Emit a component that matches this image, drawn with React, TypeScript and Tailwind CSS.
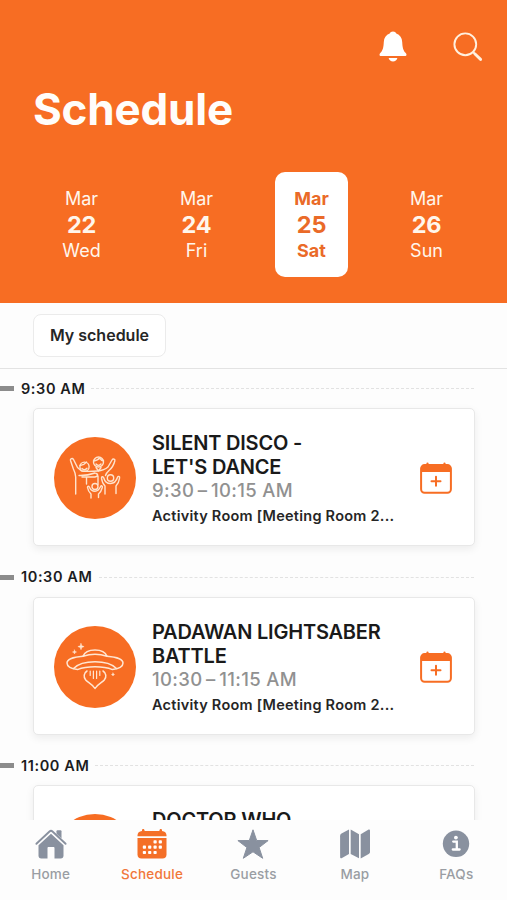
import React, { useState } from 'react';

interface Day {
  month: string;
  date: string;
  weekday: string;
}

interface Session {
  slot: string;
  title: string[];
  time: string;
  room: string;
  art: 'disco' | 'ufo' | 'none';
}

const days: Day[] = [
  { month: 'Mar', date: '22', weekday: 'Wed' },
  { month: 'Mar', date: '24', weekday: 'Fri' },
  { month: 'Mar', date: '25', weekday: 'Sat' },
  { month: 'Mar', date: '26', weekday: 'Sun' },
];

// Times use thin spaces around the dash
const sessions: Session[] = [
  {
    slot: '9:30 AM',
    title: ['SILENT DISCO -', "LET'S DANCE"],
    time: '9:30\u2009–\u200910:15 AM',
    room: 'Activity Room [Meeting Room 2...',
    art: 'disco',
  },
  {
    slot: '10:30 AM',
    title: ['PADAWAN LIGHTSABER', 'BATTLE'],
    time: '10:30\u2009–\u200911:15 AM',
    room: 'Activity Room [Meeting Room 2...',
    art: 'ufo',
  },
  {
    slot: '11:00 AM',
    title: ['DOCTOR WHO'],
    time: '',
    room: '',
    art: 'none',
  },
];

// Icons
const BellIcon = () => (
  <svg width="28" height="32" viewBox="0 0 28 32" fill="#fff">
    <path d="M14 .5c1.600 0 2.800.9 3.300 2.100 3.700 1.400 5.700 4.400 5.900 8.400.3 5.500 1 8.600 3.300 10.800.7.700 1 1.300 1 1.900 0 .8-.6 1.300-1.600 1.300H2.100C1.100 25 .5 24.500.5 23.700c0-.6.3-1.200 1-1.900 2.300-2.200 3-5.300 3.300-10.800.2-4 2.200-7 5.900-8.400C11.200 1.400 12.400.5 14 .5z" />
    <path d="M9.600 27h8.800c-.6 2.200-2.200 3.500-4.400 3.500S10.200 29.200 9.600 27z" />
  </svg>
);

const SearchIcon = () => (
  <svg width="30" height="30" viewBox="0 0 30 30" fill="none" stroke="#fff0df" strokeLinecap="round">
    <circle cx="12.300" cy="12.300" r="10.900" strokeWidth="1.900" />
    <path d="M20.300 20.300l1.500 1.500" strokeWidth="2" />
    <path d="M22 22l5.600 5.400" strokeWidth="2.900" />
  </svg>
);

const AddCalendarIcon = () => (
  <svg width="32" height="32" viewBox="0 0 32 32" fill="none" stroke="#f76d23">
    <rect x="1.100" y="3.100" width="29.800" height="27.700" rx="3.500" strokeWidth="2" />
    <path d="M1.500 10V6.500a3.500 3.500 0 013.500-3.400h22a3.500 3.500 0 013.500 3.400V10z" fill="#f76d23" stroke="none" />
    <path d="M7.500 3.500V1.600M24.500 3.500V1.600" strokeWidth="2.200" strokeLinecap="round" />
    <path d="M16 14.800v9M11.500 19.300h9" strokeWidth="2" strokeLinecap="round" />
  </svg>
);

const DiscoArt = () => (
  <svg width="82" height="82" viewBox="0 0 82 82" fill="none" stroke="#ffe3cc" strokeWidth="1.400" strokeLinecap="round" strokeLinejoin="round">
    <path d="M21.700 57V40c0-3-.8-5-2.300-8L16.500 23.500c-.6-2 2-2.800 3-1l4 8 4 3.500c5 .6 11 .4 16 0 5-.4 8-1.600 10.500-4L58 23c1.200-2 3.500-.8 2.800 1-1 4-2.800 7-5.800 9.500-2 1.800-3 3-3.500 5" />
    <circle cx="30.500" cy="29.700" r="4.600" />
    <path d="M26 28.500c3-.4 5-1.400 6.500-3.400M28 31.500c1.500 1.500 3.500 1.500 5-.3" />
    <circle cx="44.500" cy="25" r="5" />
    <path d="M39.500 24c3-.5 5-1.500 6-3 1 1.500 2.500 2.500 4 2.800M42 27c1.500 1.800 3.500 1.800 5 0M42 30.500l2.500 3.500 2.500-3.500M25 38.500c5 .2 9 0 16-2.500M28 40h13c3-.4 3.500-3 1-3.500M32.500 41v6M44 39v8.500" />
    <circle cx="41" cy="49.500" r="3" />
    <path d="M37 61v-4c-2-1.800-3-3.500-3.500-6.500-.2-1.600 1.500-1.800 2-.3.800 2.200 2.500 4 5.500 4s4.200-1.800 5.500-4.500c.7-1.500 2.300-.8 1.800.8-.8 3-1.800 5-3.800 6.500v3.500" />
    <circle cx="56.500" cy="41" r="3.200" />
    <path d="M51 57v-8c-2-2-3.200-4.500-3.500-8-.1-1.600 1.700-1.800 2.200-.3.900 3.400 2.800 5.800 6.800 5.800s5.800-2.300 7-6.200c.6-1.600 2.400-1 2.100.7-.6 4-1.600 6-3.600 8v7.500" />
  </svg>
);

const UfoArt = () => (
  <svg width="82" height="82" viewBox="0 0 82 82" fill="none" stroke="#ffe6d2" strokeWidth="1.500" strokeLinecap="round" strokeLinejoin="round">
    <path d="M29 30.300c1.500-4 6-6.300 12-6.300s10.500 2.300 12 6.300c-7-2.300-17-2.300-24 0z" />
    <path d="M29 30.300C19.500 31 13 33.600 13 37c0 3.500 4.500 5.700 10.500 6.600C28 41.800 34 40.800 41 40.800s13 1 17.500 2.800C64.500 42.700 69 40.500 69 37c0-3.400-6.500-6-16-6.700" />
    <path d="M19.500 42.500C24 38 32 35.800 41 35.800s17 2.200 21.500 6.700" />
    <path d="M33 45c-3.200 2-3.800 6.200-1.300 9C34 56.500 38.500 58 41 62.500c2.500-4.500 7-6 9.300-8.500 2.500-2.800 1.900-7-1.300-9" />
    <path d="M36.200 45v4.500M39.400 45v7.500M42.600 45v7.500M45.800 45v4.500" strokeWidth="1.200" />
    <path d="M27 17.500l.8 2.300 2.300.8-2.300.8-.8 2.300-.8-2.300-2.300-.8 2.300-.8zM20.500 24l.5 1.500 1.500.5-1.500.5-.5 1.500-.5-1.500-1.500-.5 1.500-.5zM59 47l.4 1.100 1.100.4-1.100.4-.4 1.100-.4-1.100-1.100-.4 1.100-.4z" fill="#ffe6d2" strokeWidth=".5" />
  </svg>
);

const HomeIcon = () => (
  <svg width="32" height="32" viewBox="0 0 32 32" fill="#89919f">
    <path d="M1.400 15.800L14.500 3.500a2.200 2.200 0 013 0l13.100 12.300" fill="none" stroke="#89919f" strokeWidth="1.900" strokeLinecap="round" />
    <path d="M21.500 3.200c0-.5.400-.9.900-.9h3.200c.5 0 .9.400.9.900v7.300l-5-4.700z" />
    <path d="M3.500 17.300L16 5.800l12.500 11.500v10.500c0 1.600-1 2.700-2.700 2.700h-6.300V20c0-.7-.4-1.100-1-1.100h-5c-.6 0-1 .4-1 1.100v10.500H6.200c-1.700 0-2.700-1.100-2.700-2.700z" />
  </svg>
);

const CalendarIcon = () => (
  <svg width="30" height="32" viewBox="0 0 30 32" fill="#f46f27">
    <path d="M5 3V2c0-1.500 2.400-1.500 2.400 0 0 .7.300 1 1 1h13.200c.7 0 1-.3 1-1 0-1.500 2.400-1.500 2.400 0v1c2.800.2 4.500 2 4.500 4.200v1.100H.5V7.200C.5 5 2.200 3.200 5 3z" />
    <path d="M.5 10h29v16.500c0 2.500-1.500 4-4 4h-21c-2.500 0-4-1.500-4-4z" />
    <g fill="#fff">
      <rect x="16.500" y="12.300" width="3.200" height="3.200" rx=".8" />
      <rect x="21.700" y="12.300" width="3.200" height="3.200" rx=".8" />
      <rect x="5.800" y="17.600" width="3.200" height="3.200" rx=".8" />
      <rect x="11.100" y="17.600" width="3.200" height="3.200" rx=".8" />
      <rect x="16.500" y="17.600" width="3.200" height="3.200" rx=".8" />
      <rect x="21.700" y="17.600" width="3.200" height="3.200" rx=".8" />
      <rect x="5.800" y="22.900" width="3.200" height="3.200" rx=".8" />
      <rect x="11.100" y="22.900" width="3.200" height="3.200" rx=".8" />
      <rect x="16.500" y="22.900" width="3.200" height="3.200" rx=".8" />
    </g>
  </svg>
);

const StarIcon = () => (
  <svg width="32" height="32" viewBox="0 0 32 32" fill="#89919f" stroke="#89919f" strokeWidth="1" strokeLinejoin="round">
    <path d="M16 1.800l3.700 10.700 11.400.1-9 6.900L25.700 30.300 16 23.800l-9.700 6.500 3.600-10.800-9-6.900 11.400-.1z" />
  </svg>
);

const MapIcon = () => (
  <svg width="32" height="32" viewBox="0 0 32 32" fill="#89919f">
    <path d="M10 1.500v24.500l-7 4.100c-1 .5-1.900.1-1.900-1.100V8.200c0-1.200.4-2 1.400-2.600z" />
    <path d="M11.700 1.500l8.300 4.700v24.100L11.700 26z" />
    <path d="M21.700 6.200l7.500-4.500c1-.5 1.800-.1 1.800 1.100v21c0 1-.4 1.700-1.300 2.300l-8 4.400z" />
  </svg>
);

const InfoIcon = () => (
  <svg width="28" height="32" viewBox="0 0 28 32">
    <circle cx="14" cy="15.800" r="13.200" fill="#89919f" />
    <circle cx="13.900" cy="9.600" r="1.900" fill="#fff" />
    <path d="M11.200 13.600h3.600v7.800M10.800 21.500h6.800" fill="none" stroke="#fff" strokeWidth="2.300" strokeLinecap="round" />
  </svg>
);

const tabs = [
  { label: 'Home', Icon: HomeIcon },
  { label: 'Schedule', Icon: CalendarIcon },
  { label: 'Guests', Icon: StarIcon },
  { label: 'Map', Icon: MapIcon },
  { label: 'FAQs', Icon: InfoIcon },
];

const SessionCard: React.FC<{ session: Session }> = ({ session }) => (
  <section className="h-[188.500px] shrink-0">
    <div className="flex h-[39px] items-center">
      <div className="h-[5px] w-[14px] bg-[#8c8c8c]" />
      <h2 className="ml-[7px] text-[14.500px] leading-5 font-semibold tracking-[0.600px] text-[#1c1c1e]">{session.slot}</h2>
      <div className="mr-[33px] ml-[6px] flex-1 border-t border-dashed border-[#e2e2e2]" />
    </div>
    <article className="mr-8 ml-[33px] flex h-[138px] rounded-[5px] border border-[#e8e8e8] bg-white shadow-[0_3px_8px_rgba(0,0,0,0.07)]">
      <div className="mt-[28px] ml-[20px] h-[82px] w-[82px] shrink-0 rounded-full bg-[#f76d23]">
        {session.art === 'disco' && <DiscoArt />}
        {session.art === 'ufo' && <UfoArt />}
      </div>
      <div className="mt-[22px] ml-4 flex-1 whitespace-nowrap">
        <h3 className="text-[20px] leading-6 font-semibold tracking-[-0.200px] text-[#1a1a1a]">
          {session.title.map((line) => (
            <span key={line} className="block">{line}</span>
          ))}
        </h3>
        <p className="text-[18.500px] leading-[23px] font-medium tracking-[0.350px] text-[#919191]">{session.time}</p>
        <p className="mt-px text-[14.500px] leading-[26px] font-semibold tracking-[0.250px] text-[#262626]">{session.room}</p>
      </div>
      <button className="mt-[53px] mr-[22px] h-8 w-8 shrink-0" aria-label="Add to my schedule">
        <AddCalendarIcon />
      </button>
    </article>
  </section>
);

const App: React.FC = () => {
  const [selectedDay, setSelectedDay] = useState('25');
  const [activeTab, setActiveTab] = useState('Schedule');

  return (
    <div className="flex h-[900px] w-[507px] flex-col overflow-hidden bg-[#fdfdfd] font-[Inter,sans-serif]">
      <header className="h-[303px] shrink-0 bg-[#f76d23] text-[#fff6ec]">
        <div className="flex h-[82px] items-start justify-end gap-[46px] pt-[31px] pr-6">
          <button aria-label="Notifications"><BellIcon /></button>
          <button className="mt-px" aria-label="Search"><SearchIcon /></button>
        </div>
        <h1 className="ml-[33px] text-[44px] leading-[54px] font-bold tracking-[-0.200px] text-[#fffdfa]">Schedule</h1>
        <div className="mt-9 ml-6 grid w-[460px] grid-cols-4">
          {days.map((day) => {
            const isSelected = day.date === selectedDay;
            return (
              <button
                key={day.date}
                className={`mx-auto flex h-[105px] w-[73px] flex-col items-center justify-center rounded-[10px] pt-px text-[18px] leading-[26px] ${
                  isSelected ? 'bg-white font-bold text-[#ea6a28]' : ''
                }`}
                onClick={() => setSelectedDay(day.date)}
              >
                <span>{day.month}</span>
                <span className="text-[23.500px] font-bold tracking-[-0.200px]">{day.date}</span>
                <span>{day.weekday}</span>
              </button>
            );
          })}
        </div>
      </header>

      <div className="h-[66px] shrink-0 border-b border-[#e3e3e3] pt-[11px] pl-[33px]">
        <button className="h-[43px] w-[133px] rounded-lg border border-[#ebebeb] bg-white pb-px text-[16px] font-semibold text-[#262626]">
          My schedule
        </button>
      </div>

      <main className="min-h-0 flex-1 overflow-hidden">
        {sessions.map((session) => (
          <SessionCard key={session.slot} session={session} />
        ))}
      </main>

      <nav className="grid h-20 shrink-0 grid-cols-5 bg-[#fdfdfd]">
        {tabs.map(({ label, Icon }) => (
          <button
            key={label}
            className={`flex flex-col items-center pt-2 text-[13.500px] leading-5 font-medium ${
              label === activeTab ? 'text-[#f1773a]' : 'text-[#9a9da3]'
            }`}
            onClick={() => setActiveTab(label)}
          >
            <Icon />
            <span className="mt-1 tracking-[0.200px]">{label}</span>
          </button>
        ))}
      </nav>
    </div>
  );
};

export default App;
